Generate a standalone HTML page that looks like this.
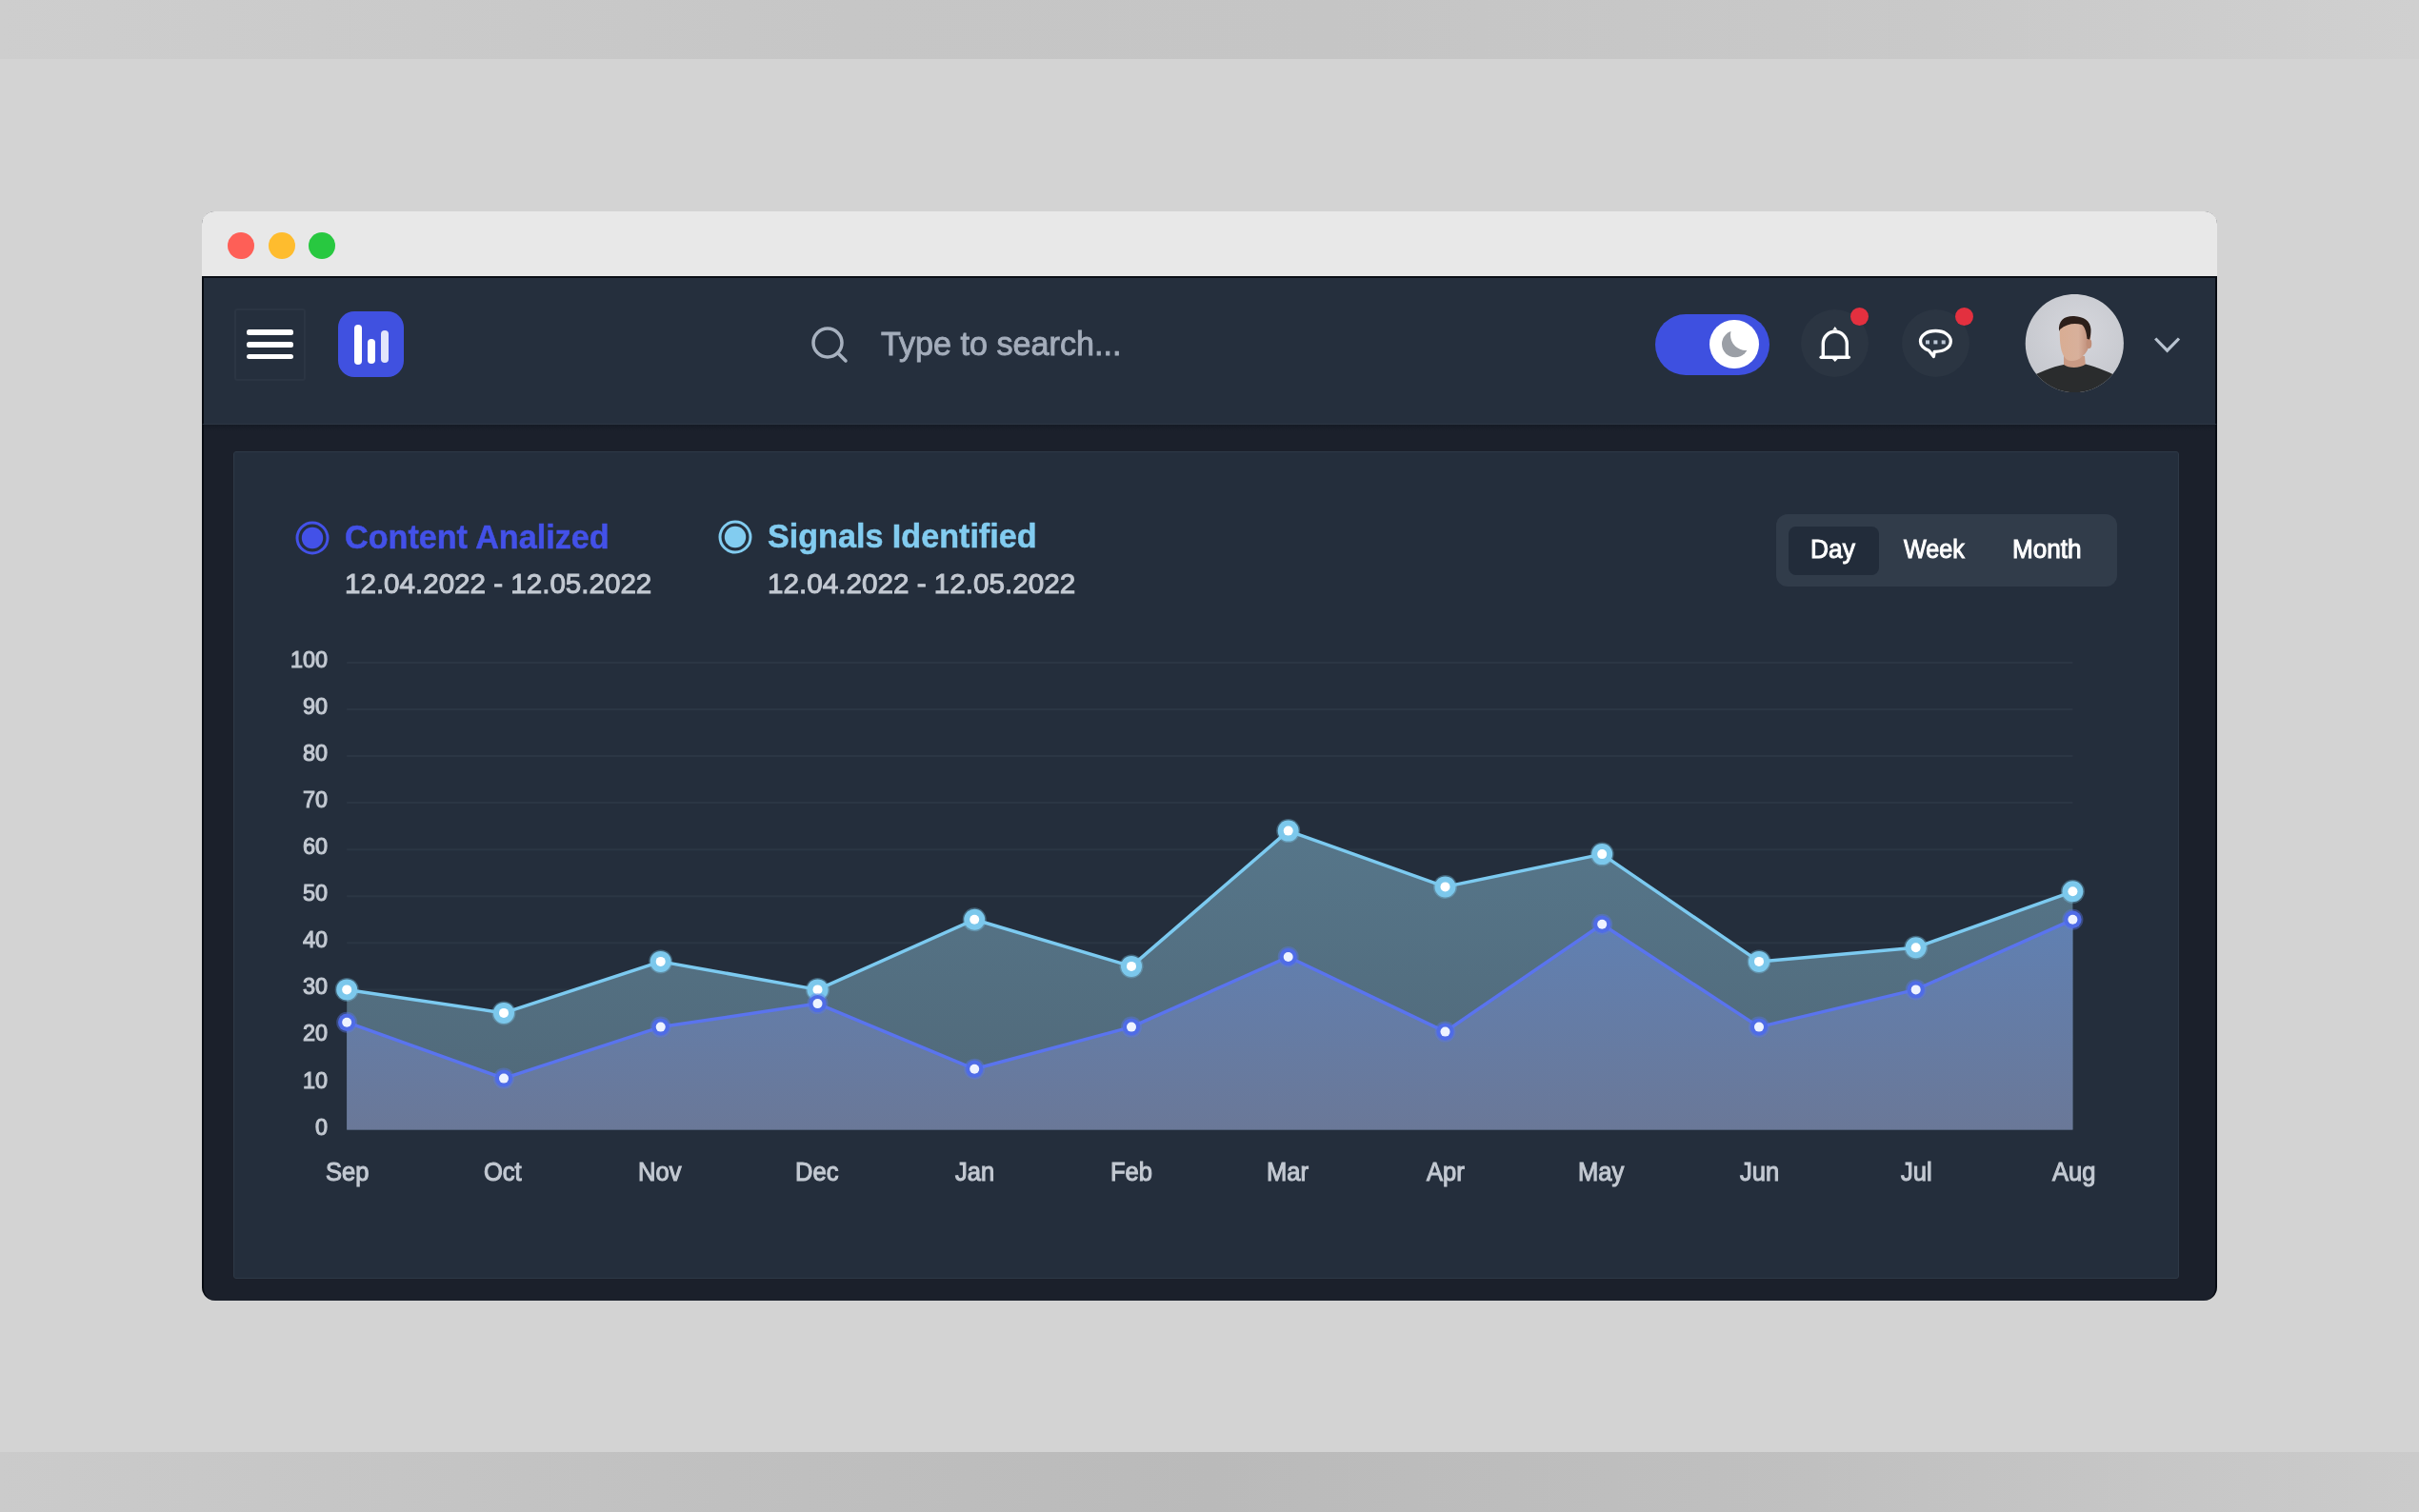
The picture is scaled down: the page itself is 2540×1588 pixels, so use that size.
<!DOCTYPE html>
<html><head><meta charset="utf-8">
<style>
*{margin:0;padding:0;box-sizing:border-box}
html,body{width:2540px;height:1588px;overflow:hidden}
body{background:#d3d3d3;position:relative;font-family:"Liberation Sans",sans-serif}
.a{position:absolute}
.t{position:absolute;white-space:nowrap;line-height:1;font-family:"Liberation Sans",sans-serif}
#topband{left:0;top:0;width:2540px;height:62px;background:linear-gradient(90deg,#cecece 0%,#c6c6c6 35%,#c5c5c5 55%,#c9c9c9 80%,#d0d0d0 100%)}
#botband{left:0;top:1525px;width:2540px;height:63px;background:linear-gradient(90deg,#cbcbcb 0%,#c0c0c0 30%,#bababa 50%,#c0c0c0 75%,#cbcbcb 100%)}
#win{left:212px;top:222px;width:2116px;height:1144px;border-radius:14px;background:#1b202b;overflow:hidden;border-left:2px solid #070b12;border-right:2px solid #070b12}
#title{left:212px;top:222px;width:2116px;height:68px;background:#e8e8e8;border-radius:13px 13px 0 0}
.tl{width:28px;height:28px;border-radius:50%;top:244px}
#header{left:212px;top:290px;width:2116px;height:156px;background:#252f3d;border-top:2px solid #0a0e15;border-bottom:1px solid #2c3643;border-left:2px solid #070b12;border-right:2px solid #070b12}
#hshadow{left:214px;top:446px;width:2112px;height:7px;background:linear-gradient(#151b25,#1b202b)}
#card{left:245px;top:474px;width:2043px;height:869px;background:#242e3c;border:1.5px solid #2e3947;border-radius:3px}
#hamb{left:246px;top:324px;width:75px;height:76px;border:2px solid #2b3543;border-radius:3px}
.hl{left:259px;width:49px;height:5.8px;background:#fff;border-radius:2.5px}
#logo{left:355px;top:327px;width:69px;height:69px;background:#4051e0;border-radius:17px}
.bar{background:#fff;border-radius:4px;width:8px}
#toggle{left:1738px;top:330px;width:120px;height:64px;border-radius:32px;background:#3e50e0}
#knob{left:1795.2px;top:335.6px;width:51.5px;height:51.5px;border-radius:50%;background:#fff}
.ibtn{width:71px;height:71px;border-radius:50%;background:#2b3542;top:325px}
.rdot{width:19px;height:19px;border-radius:50%;background:#e3303f;top:322.5px}
#seg{left:1865px;top:540px;width:358px;height:76px;border-radius:12px;background:#313c4a}
#segact{left:1878px;top:553px;width:95px;height:51px;border-radius:8px;background:#222c3a}
</style></head>
<body>
<div id="topband" class="a"></div>
<div id="botband" class="a"></div>
<div id="win" class="a"></div>
<div id="title" class="a"></div>
<div class="a tl" style="left:239px;background:#fe5f57"></div>
<div class="a tl" style="left:282px;background:#febc2e"></div>
<div class="a tl" style="left:324px;background:#28c840"></div>
<div id="header" class="a"></div>
<div id="hshadow" class="a"></div>
<div id="card" class="a"></div>

<div id="hamb" class="a"></div>
<div class="a hl" style="top:346px"></div>
<div class="a hl" style="top:358.9px"></div>
<div class="a hl" style="top:371.7px"></div>
<div id="logo" class="a"></div>
<div class="a bar" style="left:372px;top:341px;height:42px"></div>
<div class="a bar" style="left:386px;top:356px;height:26px"></div>
<div class="a bar" style="left:400px;top:346.5px;height:34.5px;opacity:.85"></div>

<svg class="a" style="left:848px;top:338px" width="46" height="46" viewBox="0 0 46 46"><circle cx="21" cy="22" r="15" fill="none" stroke="#a7b1bf" stroke-width="3.5"/><line x1="32" y1="33" x2="40" y2="41" stroke="#a7b1bf" stroke-width="3.5" stroke-linecap="round"/></svg>

<div id="toggle" class="a"></div>
<div id="knob" class="a"></div>
<svg class="a" style="left:1790px;top:330px" width="60" height="60" viewBox="1790 330 60 60"><defs><mask id="mm"><rect x="1790" y="330" width="60" height="60" fill="#fff"/><circle cx="1833.3" cy="351.8" r="16.3" fill="#000"/></mask></defs><circle cx="1822" cy="361.3" r="14" fill="#9b9fa6" mask="url(#mm)"/></svg>

<div class="a ibtn" style="left:1891px"></div>
<div class="a ibtn" style="left:1997px"></div>
<svg class="a" style="left:1900px;top:330px" width="60" height="60" viewBox="1900 330 60 60"><path d="M1914.3 375.2 L1914.3 360.8 A12.5 12.5 0 0 1 1939.3 360.8 L1939.3 375.2" fill="none" stroke="#fff" stroke-width="3.4" stroke-linejoin="round"/><line x1="1912.2" y1="375.2" x2="1941.2" y2="375.2" stroke="#fff" stroke-width="3.6" stroke-linecap="round"/><path d="M1924.3 346.5 L1926.8 343 L1929.3 346.5 Z" fill="#fff"/><path d="M1924 377 L1926.8 380 L1929.6 377 Z" fill="#fff"/></svg>
<svg class="a" style="left:2005px;top:330px" width="60" height="60" viewBox="2005 330 60 60"><path d="M2025.5 368.2 C2019 365.5 2016.5 362 2016.5 358.4 C2016.5 352 2023.5 347.5 2032.4 347.5 C2041.3 347.5 2048.3 352 2048.3 358.4 C2048.3 364.8 2041.3 369.3 2032.4 369.3 C2032 369.3 2031.6 369.3 2031.2 369.3 L2030.4 374.5 Z" fill="none" stroke="#fff" stroke-width="3.3" stroke-linejoin="round"/><rect x="2022" y="357.4" width="4" height="4" fill="#bcc7d6"/><rect x="2030.4" y="357.4" width="4" height="4" fill="#bcc7d6"/><rect x="2038.7" y="357.4" width="4" height="4" fill="#bcc7d6"/></svg>
<div class="a rdot" style="left:1942.5px"></div>
<div class="a rdot" style="left:2052.5px"></div>

<svg class="a" style="left:2126px;top:309px" width="104" height="104" viewBox="2126 309 104 104">
  <defs><clipPath id="avc"><circle cx="2178.3" cy="360.5" r="51.6"/></clipPath>
  <radialGradient id="avbg" cx="2182" cy="350" r="60" gradientUnits="userSpaceOnUse"><stop offset="0" stop-color="#d6d7dd"/><stop offset="1" stop-color="#c6c8ce"/></radialGradient>
  <linearGradient id="face" x1="2162" y1="0" x2="2196" y2="0" gradientUnits="userSpaceOnUse"><stop offset="0" stop-color="#d9ad93"/><stop offset="0.6" stop-color="#d8b09b"/><stop offset="1" stop-color="#b98672"/></linearGradient></defs>
  <g clip-path="url(#avc)">
    <rect x="2126" y="309" width="104" height="104" fill="url(#avbg)"/>
    <path d="M2167 374 L2189 374 L2190 386 L2167 387 Z" fill="#c99a84"/>
    <path d="M2163 340 C2162 362 2164 372 2170 377.5 C2173 379.5 2177 379.5 2181 378 C2188 375 2193 368 2194.5 360 C2196 352 2195 344 2192 337 C2185 334 2170 334 2163 340 Z" fill="url(#face)"/>
    <ellipse cx="2193.5" cy="361" rx="2.8" ry="5" fill="#c08e78"/>
    <path d="M2162 348 C2161 336 2168 331.5 2178 332 C2188 332.5 2195 337 2195.5 346 C2195.6 350 2195 354 2194 356.5 L2191.5 356 C2191 349 2189 343 2186 341 C2178 339 2170 340 2163 346 Z" fill="#2d1f1a"/>
    <path d="M2126 413 L2126 398 C2140 392 2155 385 2167 383 C2172 387 2184 387 2190 382.5 C2202 385 2216 392 2230 398 L2230 413 Z" fill="#2a2c2d"/>
  </g>
</svg>
<svg class="a" style="left:2258px;top:350px" width="36" height="24" viewBox="0 0 36 24"><polyline points="5.2,5.5 17.6,18.2 30,5.5" fill="none" stroke="#b8c3d0" stroke-width="3.2"/></svg>

<svg class="a" style="left:308px;top:545px" width="40" height="40" viewBox="0 0 40 40"><circle cx="20" cy="20" r="16" fill="none" stroke="#4351e8" stroke-width="3"/><circle cx="20" cy="20" r="11.2" fill="#4351e8"/></svg>
<svg class="a" style="left:752px;top:544px" width="40" height="40" viewBox="0 0 40 40"><circle cx="20" cy="20" r="16" fill="none" stroke="#82ccf0" stroke-width="3"/><circle cx="20" cy="20" r="11.2" fill="#82ccf0"/></svg>

<div id="seg" class="a"></div>
<div id="segact" class="a"></div>

<svg class="a" style="left:0;top:0" width="2540" height="1588" viewBox="0 0 2540 1588">
<defs><linearGradient id="gs" x1="0" y1="870" x2="0" y2="1186" gradientUnits="userSpaceOnUse"><stop offset="0" stop-color="#56768a"/><stop offset="1" stop-color="#506878"/></linearGradient><linearGradient id="gc" x1="0" y1="966" x2="0" y2="1186" gradientUnits="userSpaceOnUse"><stop offset="0" stop-color="#6080b2"/><stop offset="1" stop-color="#6a7898"/></linearGradient></defs>
<line x1="364.2" y1="1137.5" x2="2176.4" y2="1137.5" stroke="#8fa4bf" stroke-opacity="0.07" stroke-width="2"/>
<line x1="364.2" y1="1088.5" x2="2176.4" y2="1088.5" stroke="#8fa4bf" stroke-opacity="0.07" stroke-width="2"/>
<line x1="364.2" y1="1039.4" x2="2176.4" y2="1039.4" stroke="#8fa4bf" stroke-opacity="0.07" stroke-width="2"/>
<line x1="364.2" y1="990.3" x2="2176.4" y2="990.3" stroke="#8fa4bf" stroke-opacity="0.07" stroke-width="2"/>
<line x1="364.2" y1="941.2" x2="2176.4" y2="941.2" stroke="#8fa4bf" stroke-opacity="0.07" stroke-width="2"/>
<line x1="364.2" y1="892.2" x2="2176.4" y2="892.2" stroke="#8fa4bf" stroke-opacity="0.07" stroke-width="2"/>
<line x1="364.2" y1="843.1" x2="2176.4" y2="843.1" stroke="#8fa4bf" stroke-opacity="0.07" stroke-width="2"/>
<line x1="364.2" y1="794.0" x2="2176.4" y2="794.0" stroke="#8fa4bf" stroke-opacity="0.07" stroke-width="2"/>
<line x1="364.2" y1="745.0" x2="2176.4" y2="745.0" stroke="#8fa4bf" stroke-opacity="0.07" stroke-width="2"/>
<line x1="364.2" y1="695.9" x2="2176.4" y2="695.9" stroke="#8fa4bf" stroke-opacity="0.07" stroke-width="2"/>
<polygon points="364.2,1186.6 364.2,1039.4 529.0,1063.9 693.7,1009.9 858.5,1039.4 1023.2,965.8 1188.0,1014.9 1352.7,872.6 1517.5,931.4 1682.2,897.1 1847.0,1009.9 2011.7,995.2 2176.4,936.3 2176.4,1186.6" fill="url(#gs)"/>
<polygon points="364.2,1186.6 364.2,1073.7 529.0,1132.6 693.7,1078.6 858.5,1054.1 1023.2,1122.8 1188.0,1078.6 1352.7,1005.0 1517.5,1083.6 1682.2,970.7 1847.0,1078.6 2011.7,1039.4 2176.4,965.8 2176.4,1186.6" fill="url(#gc)"/>
<polyline points="364.2,1039.4 529.0,1063.9 693.7,1009.9 858.5,1039.4 1023.2,965.8 1188.0,1014.9 1352.7,872.6 1517.5,931.4 1682.2,897.1 1847.0,1009.9 2011.7,995.2 2176.4,936.3" fill="none" stroke="#7ccaf0" stroke-width="3.5" stroke-linejoin="round"/>
<polyline points="364.2,1073.7 529.0,1132.6 693.7,1078.6 858.5,1054.1 1023.2,1122.8 1188.0,1078.6 1352.7,1005.0 1517.5,1083.6 1682.2,970.7 1847.0,1078.6 2011.7,1039.4 2176.4,965.8" fill="none" stroke="#5a74ee" stroke-width="3.5" stroke-linejoin="round"/>
<circle cx="364.2" cy="1039.4" r="12.5" fill="#7cc8ec" fill-opacity="0.35"/><circle cx="364.2" cy="1039.4" r="11" fill="#7cc8ec"/><circle cx="364.2" cy="1039.4" r="5" fill="#ffffff"/>
<circle cx="529.0" cy="1063.9" r="12.5" fill="#7cc8ec" fill-opacity="0.35"/><circle cx="529.0" cy="1063.9" r="11" fill="#7cc8ec"/><circle cx="529.0" cy="1063.9" r="5" fill="#ffffff"/>
<circle cx="693.7" cy="1009.9" r="12.5" fill="#7cc8ec" fill-opacity="0.35"/><circle cx="693.7" cy="1009.9" r="11" fill="#7cc8ec"/><circle cx="693.7" cy="1009.9" r="5" fill="#ffffff"/>
<circle cx="858.5" cy="1039.4" r="12.5" fill="#7cc8ec" fill-opacity="0.35"/><circle cx="858.5" cy="1039.4" r="11" fill="#7cc8ec"/><circle cx="858.5" cy="1039.4" r="5" fill="#ffffff"/>
<circle cx="1023.2" cy="965.8" r="12.5" fill="#7cc8ec" fill-opacity="0.35"/><circle cx="1023.2" cy="965.8" r="11" fill="#7cc8ec"/><circle cx="1023.2" cy="965.8" r="5" fill="#ffffff"/>
<circle cx="1188.0" cy="1014.9" r="12.5" fill="#7cc8ec" fill-opacity="0.35"/><circle cx="1188.0" cy="1014.9" r="11" fill="#7cc8ec"/><circle cx="1188.0" cy="1014.9" r="5" fill="#ffffff"/>
<circle cx="1352.7" cy="872.6" r="12.5" fill="#7cc8ec" fill-opacity="0.35"/><circle cx="1352.7" cy="872.6" r="11" fill="#7cc8ec"/><circle cx="1352.7" cy="872.6" r="5" fill="#ffffff"/>
<circle cx="1517.5" cy="931.4" r="12.5" fill="#7cc8ec" fill-opacity="0.35"/><circle cx="1517.5" cy="931.4" r="11" fill="#7cc8ec"/><circle cx="1517.5" cy="931.4" r="5" fill="#ffffff"/>
<circle cx="1682.2" cy="897.1" r="12.5" fill="#7cc8ec" fill-opacity="0.35"/><circle cx="1682.2" cy="897.1" r="11" fill="#7cc8ec"/><circle cx="1682.2" cy="897.1" r="5" fill="#ffffff"/>
<circle cx="1847.0" cy="1009.9" r="12.5" fill="#7cc8ec" fill-opacity="0.35"/><circle cx="1847.0" cy="1009.9" r="11" fill="#7cc8ec"/><circle cx="1847.0" cy="1009.9" r="5" fill="#ffffff"/>
<circle cx="2011.7" cy="995.2" r="12.5" fill="#7cc8ec" fill-opacity="0.35"/><circle cx="2011.7" cy="995.2" r="11" fill="#7cc8ec"/><circle cx="2011.7" cy="995.2" r="5" fill="#ffffff"/>
<circle cx="2176.4" cy="936.3" r="12.5" fill="#7cc8ec" fill-opacity="0.35"/><circle cx="2176.4" cy="936.3" r="11" fill="#7cc8ec"/><circle cx="2176.4" cy="936.3" r="5" fill="#ffffff"/>
<circle cx="364.2" cy="1073.7" r="11" fill="#5a78ea" fill-opacity="0.4"/><circle cx="364.2" cy="1073.7" r="9.2" fill="#4f6ce6"/><circle cx="364.2" cy="1073.7" r="5" fill="#eef3ff"/>
<circle cx="529.0" cy="1132.6" r="11" fill="#5a78ea" fill-opacity="0.4"/><circle cx="529.0" cy="1132.6" r="9.2" fill="#4f6ce6"/><circle cx="529.0" cy="1132.6" r="5" fill="#eef3ff"/>
<circle cx="693.7" cy="1078.6" r="11" fill="#5a78ea" fill-opacity="0.4"/><circle cx="693.7" cy="1078.6" r="9.2" fill="#4f6ce6"/><circle cx="693.7" cy="1078.6" r="5" fill="#eef3ff"/>
<circle cx="858.5" cy="1054.1" r="11" fill="#5a78ea" fill-opacity="0.4"/><circle cx="858.5" cy="1054.1" r="9.2" fill="#4f6ce6"/><circle cx="858.5" cy="1054.1" r="5" fill="#eef3ff"/>
<circle cx="1023.2" cy="1122.8" r="11" fill="#5a78ea" fill-opacity="0.4"/><circle cx="1023.2" cy="1122.8" r="9.2" fill="#4f6ce6"/><circle cx="1023.2" cy="1122.8" r="5" fill="#eef3ff"/>
<circle cx="1188.0" cy="1078.6" r="11" fill="#5a78ea" fill-opacity="0.4"/><circle cx="1188.0" cy="1078.6" r="9.2" fill="#4f6ce6"/><circle cx="1188.0" cy="1078.6" r="5" fill="#eef3ff"/>
<circle cx="1352.7" cy="1005.0" r="11" fill="#5a78ea" fill-opacity="0.4"/><circle cx="1352.7" cy="1005.0" r="9.2" fill="#4f6ce6"/><circle cx="1352.7" cy="1005.0" r="5" fill="#eef3ff"/>
<circle cx="1517.5" cy="1083.6" r="11" fill="#5a78ea" fill-opacity="0.4"/><circle cx="1517.5" cy="1083.6" r="9.2" fill="#4f6ce6"/><circle cx="1517.5" cy="1083.6" r="5" fill="#eef3ff"/>
<circle cx="1682.2" cy="970.7" r="11" fill="#5a78ea" fill-opacity="0.4"/><circle cx="1682.2" cy="970.7" r="9.2" fill="#4f6ce6"/><circle cx="1682.2" cy="970.7" r="5" fill="#eef3ff"/>
<circle cx="1847.0" cy="1078.6" r="11" fill="#5a78ea" fill-opacity="0.4"/><circle cx="1847.0" cy="1078.6" r="9.2" fill="#4f6ce6"/><circle cx="1847.0" cy="1078.6" r="5" fill="#eef3ff"/>
<circle cx="2011.7" cy="1039.4" r="11" fill="#5a78ea" fill-opacity="0.4"/><circle cx="2011.7" cy="1039.4" r="9.2" fill="#4f6ce6"/><circle cx="2011.7" cy="1039.4" r="5" fill="#eef3ff"/>
<circle cx="2176.4" cy="965.8" r="11" fill="#5a78ea" fill-opacity="0.4"/><circle cx="2176.4" cy="965.8" r="9.2" fill="#4f6ce6"/><circle cx="2176.4" cy="965.8" r="5" fill="#eef3ff"/>
</svg>
<div class="t" style="left:925.4px;top:344.1px;font-size:34.564px;font-weight:400;color:#a4adbb;-webkit-text-stroke:0.9px #a4adbb;transform:scaleX(0.9887);transform-origin:0 0;">Type to search...</div>
<div class="t" style="left:362.05px;top:546.25px;font-size:35.265px;font-weight:700;color:#4351e8;-webkit-text-stroke:0.5px #4351e8;transform:scaleX(0.9688);transform-origin:0 0;">Content Analized</div>
<div class="t" style="left:805.55px;top:546.25px;font-size:35.432px;font-weight:700;color:#82ccf0;-webkit-text-stroke:0.5px #82ccf0;transform:scaleX(0.9635);transform-origin:0 0;">Signals Identified</div>
<div class="t" style="left:361.6px;top:597.6px;font-size:29.92px;font-weight:400;color:#c3c9d2;-webkit-text-stroke:1.0px #c3c9d2;transform:scaleX(0.9888);transform-origin:0 0;">12.04.2022 - 12.05.2022</div>
<div class="t" style="left:805.9px;top:597.7px;font-size:30.0px;font-weight:400;color:#c3c9d2;-webkit-text-stroke:1.0px #c3c9d2;transform:scaleX(0.9884);transform-origin:0 0;">12.04.2022 - 12.05.2022</div>
<div class="t" style="left:1900.6px;top:562.9px;font-size:27.4px;font-weight:400;color:#ffffff;-webkit-text-stroke:1.0px #ffffff;transform:scaleX(0.962);transform-origin:0 0;">Day</div>
<div class="t" style="left:1999.2px;top:562.9px;font-size:27.4px;font-weight:400;color:#ffffff;-webkit-text-stroke:1.0px #ffffff;transform:scaleX(0.9171);transform-origin:0 0;">Week</div>
<div class="t" style="left:2112.5px;top:562.9px;font-size:27.4px;font-weight:400;color:#ffffff;-webkit-text-stroke:1.0px #ffffff;transform:scaleX(0.9537);transform-origin:0 0;">Month</div>
<div class="t" style="left:304.9px;top:680.9px;font-size:24.4px;font-weight:400;color:#c3c9d2;-webkit-text-stroke:1.1px #c3c9d2;transform:scaleX(0.96);transform-origin:0 0;">100</div>
<div class="t" style="left:317.9px;top:729.97px;font-size:24.4px;font-weight:400;color:#c3c9d2;-webkit-text-stroke:1.1px #c3c9d2;transform:scaleX(0.96);transform-origin:0 0;">90</div>
<div class="t" style="left:317.9px;top:779.04px;font-size:24.4px;font-weight:400;color:#c3c9d2;-webkit-text-stroke:1.1px #c3c9d2;transform:scaleX(0.96);transform-origin:0 0;">80</div>
<div class="t" style="left:317.9px;top:828.11px;font-size:24.4px;font-weight:400;color:#c3c9d2;-webkit-text-stroke:1.1px #c3c9d2;transform:scaleX(0.96);transform-origin:0 0;">70</div>
<div class="t" style="left:317.9px;top:877.18px;font-size:24.4px;font-weight:400;color:#c3c9d2;-webkit-text-stroke:1.1px #c3c9d2;transform:scaleX(0.96);transform-origin:0 0;">60</div>
<div class="t" style="left:317.9px;top:926.25px;font-size:24.4px;font-weight:400;color:#c3c9d2;-webkit-text-stroke:1.1px #c3c9d2;transform:scaleX(0.96);transform-origin:0 0;">50</div>
<div class="t" style="left:317.9px;top:975.32px;font-size:24.4px;font-weight:400;color:#c3c9d2;-webkit-text-stroke:1.1px #c3c9d2;transform:scaleX(0.96);transform-origin:0 0;">40</div>
<div class="t" style="left:317.9px;top:1024.39px;font-size:24.4px;font-weight:400;color:#c3c9d2;-webkit-text-stroke:1.1px #c3c9d2;transform:scaleX(0.96);transform-origin:0 0;">30</div>
<div class="t" style="left:317.9px;top:1073.46px;font-size:24.4px;font-weight:400;color:#c3c9d2;-webkit-text-stroke:1.1px #c3c9d2;transform:scaleX(0.96);transform-origin:0 0;">20</div>
<div class="t" style="left:317.9px;top:1122.53px;font-size:24.4px;font-weight:400;color:#c3c9d2;-webkit-text-stroke:1.1px #c3c9d2;transform:scaleX(0.96);transform-origin:0 0;">10</div>
<div class="t" style="left:330.9px;top:1171.6px;font-size:24.4px;font-weight:400;color:#c3c9d2;-webkit-text-stroke:1.1px #c3c9d2;transform:scaleX(0.96);transform-origin:0 0;">0</div>
<div class="t" style="left:341.9px;top:1216.5px;font-size:27.6px;font-weight:400;color:#c3c9d2;-webkit-text-stroke:1.1px #c3c9d2;transform:scaleX(0.925);transform-origin:0 0;">Sep</div>
<div class="t" style="left:508.4px;top:1216.5px;font-size:27.6px;font-weight:400;color:#c3c9d2;-webkit-text-stroke:1.1px #c3c9d2;transform:scaleX(0.925);transform-origin:0 0;">Oct</div>
<div class="t" style="left:670.4px;top:1216.5px;font-size:27.6px;font-weight:400;color:#c3c9d2;-webkit-text-stroke:1.1px #c3c9d2;transform:scaleX(0.925);transform-origin:0 0;">Nov</div>
<div class="t" style="left:834.9px;top:1216.5px;font-size:27.6px;font-weight:400;color:#c3c9d2;-webkit-text-stroke:1.1px #c3c9d2;transform:scaleX(0.925);transform-origin:0 0;">Dec</div>
<div class="t" style="left:1003.15px;top:1216.5px;font-size:27.6px;font-weight:400;color:#c3c9d2;-webkit-text-stroke:1.1px #c3c9d2;transform:scaleX(0.925);transform-origin:0 0;">Jan</div>
<div class="t" style="left:1165.65px;top:1216.5px;font-size:27.6px;font-weight:400;color:#c3c9d2;-webkit-text-stroke:1.1px #c3c9d2;transform:scaleX(0.925);transform-origin:0 0;">Feb</div>
<div class="t" style="left:1330.4px;top:1216.5px;font-size:27.6px;font-weight:400;color:#c3c9d2;-webkit-text-stroke:1.1px #c3c9d2;transform:scaleX(0.925);transform-origin:0 0;">Mar</div>
<div class="t" style="left:1498.15px;top:1216.5px;font-size:27.6px;font-weight:400;color:#c3c9d2;-webkit-text-stroke:1.1px #c3c9d2;transform:scaleX(0.925);transform-origin:0 0;">Apr</div>
<div class="t" style="left:1656.65px;top:1216.5px;font-size:27.6px;font-weight:400;color:#c3c9d2;-webkit-text-stroke:1.1px #c3c9d2;transform:scaleX(0.925);transform-origin:0 0;">May</div>
<div class="t" style="left:1827.4px;top:1216.5px;font-size:27.6px;font-weight:400;color:#c3c9d2;-webkit-text-stroke:1.1px #c3c9d2;transform:scaleX(0.925);transform-origin:0 0;">Jun</div>
<div class="t" style="left:1996.15px;top:1216.5px;font-size:27.6px;font-weight:400;color:#c3c9d2;-webkit-text-stroke:1.1px #c3c9d2;transform:scaleX(0.925);transform-origin:0 0;">Jul</div>
<div class="t" style="left:2154.65px;top:1216.5px;font-size:27.6px;font-weight:400;color:#c3c9d2;-webkit-text-stroke:1.1px #c3c9d2;transform:scaleX(0.925);transform-origin:0 0;">Aug</div>
</body></html>
